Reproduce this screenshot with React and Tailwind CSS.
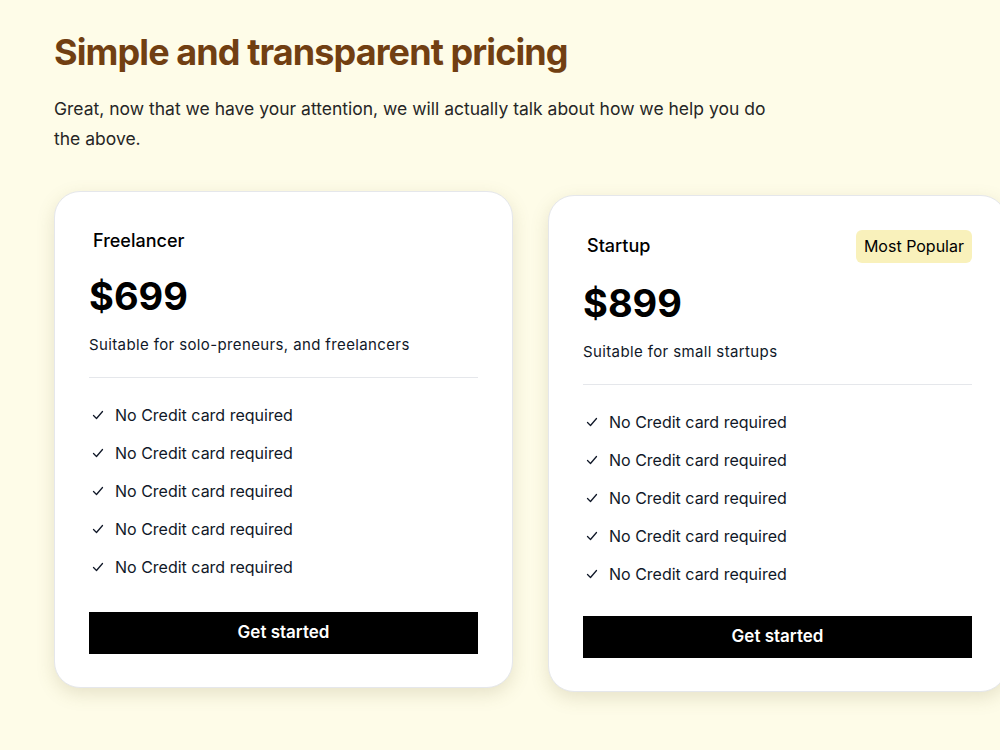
import React from 'react';

const plans = [
    {
        name: 'Freelancer',
        price: '$699',
        description: 'Suitable for solo-preneurs, and freelancers',
        popular: false,
    },
    {
        name: 'Startup',
        price: '$899',
        description: 'Suitable for small startups',
        popular: true,
    },
];

const features = [
    'No Credit card required',
    'No Credit card required',
    'No Credit card required',
    'No Credit card required',
    'No Credit card required',
];

const Check = () => (
    <svg viewBox="0 0 12 12" className="w-3 h-3 shrink-0" fill="none" stroke="currentColor" strokeWidth="1.3" strokeLinecap="round" strokeLinejoin="round">
        <path d="M1.5 6.5l3 3 6-7" />
    </svg>
);

const PlanCard = ({ plan, offset }) => (
    <div
        className={`w-[459px] h-[497px] shrink-0 bg-white rounded-[26px] border border-gray-200 shadow-[0_6px_18px_rgba(120,110,60,0.18)] pt-8 px-[34px] pb-[33px] flex flex-col ${offset ? 'mt-[4px]' : ''}`}
    >
        {/* Header */}
        <div className={`flex items-center justify-between ${plan.popular ? 'h-[36px]' : 'h-[33px]'}`}>
            <h3 className="pl-1 text-lg font-medium text-black">{plan.name}</h3>
            {plan.popular && (
                <span className="bg-[#f9f1bb] rounded-md px-2 h-[33px] flex items-center text-base text-black">
                    Most Popular
                </span>
            )}
        </div>

        <p className="mt-[17px] text-[38px] leading-[44px] font-bold text-black">{plan.price}</p>
        <p className="mt-[17px] text-[15px] leading-5 tracking-wide text-gray-900">{plan.description}</p>

        <div className="mt-[22px] border-t border-gray-200" />

        <ul className="mt-[25px] flex flex-col gap-[14px]">
            {features.map((f, idx) => (
                <li key={idx} className="flex items-center gap-[11px] pl-[3px] h-6 text-base text-gray-900">
                    <Check />
                    <span>{f}</span>
                </li>
            ))}
        </ul>

        <button className="mt-auto h-[42px] w-full bg-black text-white text-[17px] font-semibold">
            Get started
        </button>
    </div>
);

export default function App() {
    return (
        <div className="min-h-screen w-full overflow-hidden bg-[#fefce8] font-['Inter',sans-serif]">
            <div className="pl-[54px] pt-[28px]">
                <h1 className="text-4xl leading-[48px] font-bold tracking-tight text-[#713f12]">
                    Simple and transparent pricing
                </h1>
                <p className="mt-[18px] max-w-[730px] text-[17.5px] leading-[30px] text-neutral-800">
                    Great, now that we have your attention, we will actually talk about how we help you do the above.
                </p>

                {/* Plans */}
                <div className="mt-[37px] flex items-start gap-[35px]">
                    {plans.map((plan, idx) => (
                        <PlanCard key={plan.name} plan={plan} offset={idx === 1} />
                    ))}
                </div>
            </div>
        </div>
    );
}
